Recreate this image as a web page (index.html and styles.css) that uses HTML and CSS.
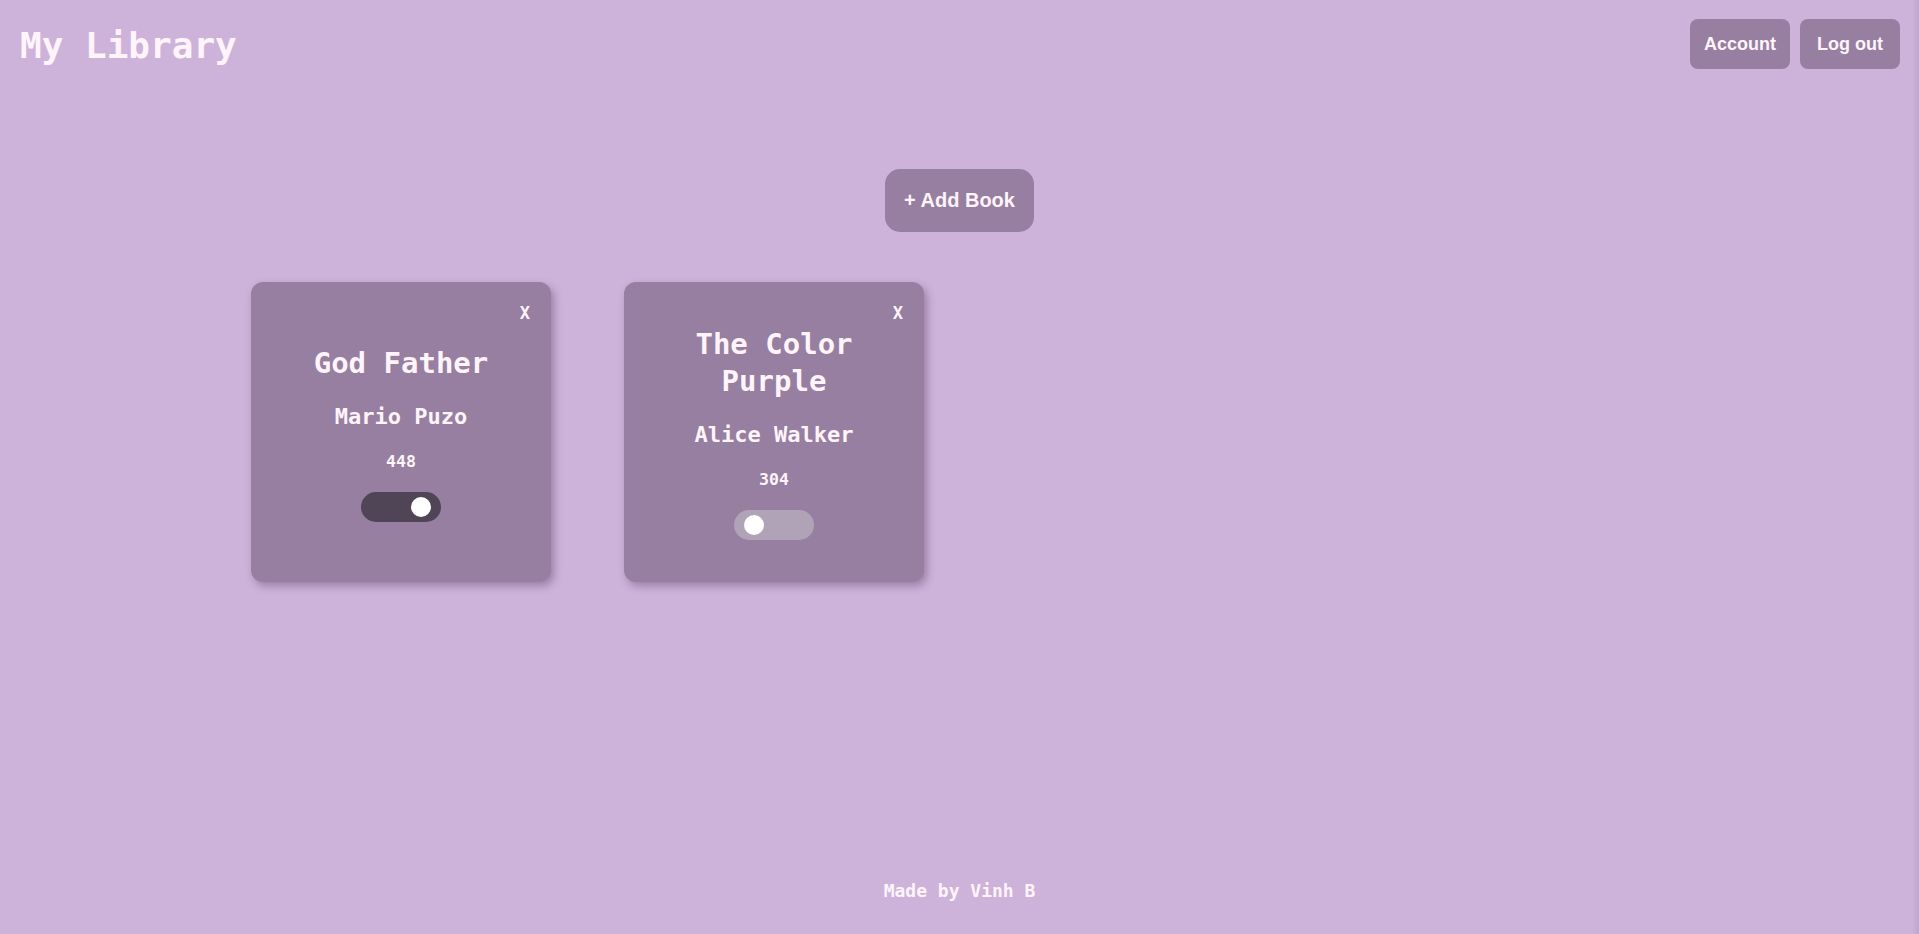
FILE: index.html
```html
<!DOCTYPE html>
<html lang="en">
<head>
<meta charset="utf-8">
<title>My Library</title>
<link rel="stylesheet" href="styles.css">
</head>
<body>
<header class="header">
  <h1 class="title">My Library</h1>
  <nav class="nav">
    <button class="nav-btn">Account</button>
    <button class="nav-btn">Log out</button>
  </nav>
</header>
<main class="main">
  <div class="add-row">
    <button class="add-btn">+ Add Book</button>
  </div>
  <section class="cards">
    <article class="card">
      <span class="card-close">X</span>
      <h2 class="card-title">God Father</h2>
      <p class="card-author">Mario Puzo</p>
      <p class="card-pages">448</p>
      <span class="toggle toggle-on"><span class="knob"></span></span>
    </article>
    <article class="card">
      <span class="card-close">X</span>
      <h2 class="card-title">The Color Purple</h2>
      <p class="card-author">Alice Walker</p>
      <p class="card-pages">304</p>
      <span class="toggle"><span class="knob"></span></span>
    </article>
  </section>
</main>
<footer class="footer">Made by Vinh B</footer>
</body>
</html>
```
FILE: styles.css
```css
html {
  background: linear-gradient(to right, #cdb3da calc(100% - 7px), #c0a6cd 100%);
}
body {
  margin: 0;
  min-height: 100vh;
  display: flex;
  flex-direction: column;
  font-family: "DejaVu Sans Mono", monospace;
  color: #fff4fa;
}
.header {
  display: flex;
  justify-content: space-between;
  align-items: flex-start;
  padding: 19px 19px 0 19px;
}
.title {
  margin: 6px 0 0 1px;
  font-size: 36px;
  line-height: 42px;
  font-weight: bold;
}
.nav {
  display: flex;
  gap: 10px;
}
.nav-btn {
  width: 100px;
  height: 50px;
  border: none;
  border-radius: 8px;
  background: #967fa0;
  color: #fff4fa;
  font-family: "Liberation Sans", Arial, sans-serif;
  font-size: 18px;
  font-weight: bold;
  padding: 0;
}
.main {
  display: flex;
  flex-direction: column;
}
.add-row {
  display: flex;
  justify-content: center;
  padding-top: 100px;
}
.add-btn {
  border: none;
  border-radius: 15px;
  background: #967fa0;
  color: #fff4fa;
  font-family: "Liberation Sans", Arial, sans-serif;
  font-size: 20px;
  line-height: 23px;
  font-weight: bold;
  padding: 20px 19px;
  white-space: nowrap;
}
.cards {
  display: flex;
  gap: 73px;
  padding: 50px 0 0 251px;
}
.card {
  position: relative;
  width: 300px;
  height: 300px;
  box-sizing: border-box;
  padding: 2px 20px 0 20px;
  border-radius: 12px;
  background: #967fa0;
  box-shadow: 3px 4px 8px rgba(60, 30, 70, 0.35);
  display: flex;
  flex-direction: column;
  align-items: center;
  justify-content: center;
  text-align: center;
}
.card-close {
  position: absolute;
  top: 21px;
  right: 21px;
  font-size: 17px;
  line-height: 20px;
  font-weight: bold;
}
.card-title {
  margin: 0;
  font-size: 29px;
  line-height: 37px;
  font-weight: bold;
}
.card-author {
  margin: 22px 0 0 0;
  font-size: 22px;
  line-height: 26px;
  font-weight: bold;
}
.card-pages {
  margin: 22px 0 0 0;
  font-size: 16.5px;
  line-height: 20px;
  font-weight: bold;
}
.toggle {
  margin-top: 20px;
  width: 80px;
  height: 30px;
  box-sizing: border-box;
  padding: 5px 10px;
  border-radius: 15px;
  background: #b0a3b7;
  display: flex;
  justify-content: flex-start;
}
.toggle-on {
  background: #504556;
  justify-content: flex-end;
}
.knob {
  width: 20px;
  height: 20px;
  border-radius: 50%;
  background: #ffffff;
}
.footer {
  margin-top: auto;
  padding-bottom: 33px;
  text-align: center;
  font-size: 18px;
  line-height: 21px;
  font-weight: bold;
}
```
